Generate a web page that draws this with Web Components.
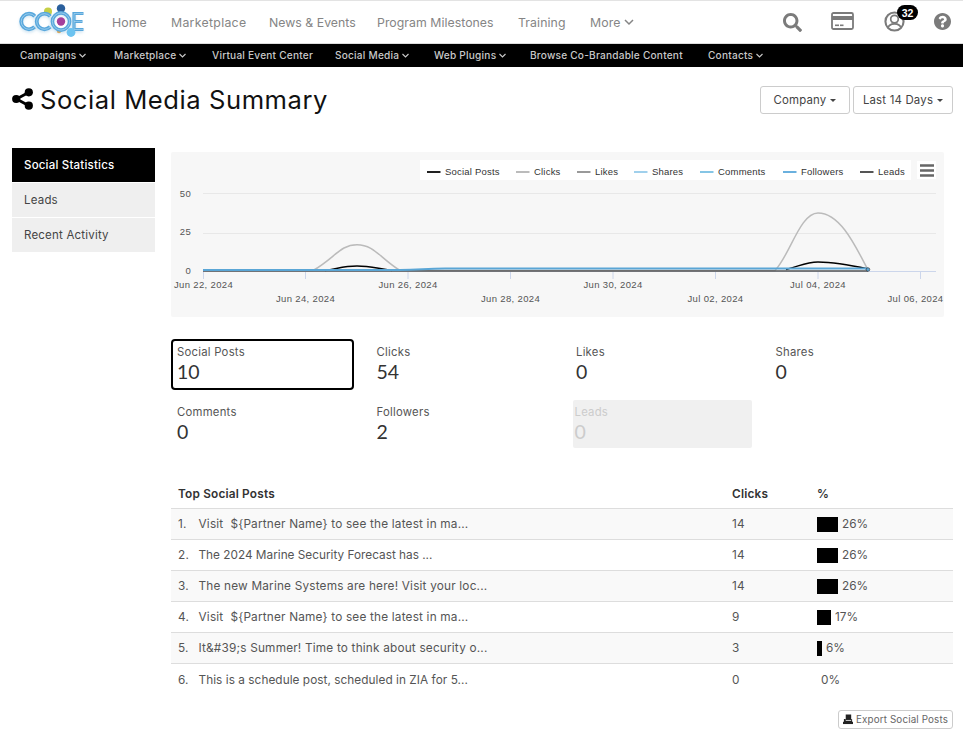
<!DOCTYPE html>
<html lang="en"><head><meta charset="utf-8"><title>Social Media Summary</title>
<style>
html,body{margin:0;padding:0;background:#fff}
body{font-family:Inter,"Open Sans",sans-serif;color:#555;width:963px;height:742px;overflow:hidden}
</style></head><body>
<cc-topnav></cc-topnav>
<cc-subnav></cc-subnav>
<cc-page>
  <cc-title slot="header">Social Media Summary</cc-title>
  <cc-sidenav slot="side"></cc-sidenav>
  <cc-chart></cc-chart>
  <cc-stats>
    <cc-stat label="Social Posts" value="10" selected></cc-stat>
    <cc-stat label="Clicks" value="54"></cc-stat>
    <cc-stat label="Likes" value="0"></cc-stat>
    <cc-stat label="Shares" value="0"></cc-stat>
    <cc-stat label="Comments" value="0"></cc-stat>
    <cc-stat label="Followers" value="2"></cc-stat>
    <cc-stat label="Leads" value="0" disabled></cc-stat>
  </cc-stats>
  <cc-posts></cc-posts>
  <cc-export>Export Social Posts</cc-export>
</cc-page>
<script>
const F='Inter,"Open Sans",sans-serif';
class Base extends HTMLElement{
  connectedCallback(){ if(!this.shadowRoot){ this.attachShadow({mode:'open'}).innerHTML=this.html(); } }
}
const chev=(s,c)=>`<svg width="${s}" height="${s}" viewBox="0 0 12 12" style="flex:none"><path d="M2 4l4 4 4-4" fill="none" stroke="${c}" stroke-width="1.5"/></svg>`;
customElements.define('cc-logo',class extends Base{html(){return `<style>:host{display:block;width:66px;height:26px;flex:none}svg{display:block;overflow:visible}</style>
<svg width="66" height="26" viewBox="20 10 66 26" role="img" aria-label="CCOE logo">
<defs><filter id="b" x="-10%" y="-10%" width="120%" height="130%"><feGaussianBlur stdDeviation="1.4"/></filter></defs>
<g filter="url(#b)" opacity=".4" fill="none" stroke="#7fb8dc" stroke-width="3"><circle cx="29" cy="24" r="8"/><circle cx="44" cy="24" r="8"/><circle cx="61" cy="24" r="9"/><path d="M74 16v16h9"/></g>
<circle cx="48" cy="12.5" r="4" fill="#c6cf45"/>
<circle cx="61" cy="9.5" r="4.2" fill="#2a5f9c"/>
<circle cx="59" cy="32" r="2.2" fill="#d9a860"/>
<g fill="none" stroke-linecap="butt">
<circle cx="29" cy="22.5" r="7.8" stroke="#58a7dc" stroke-width="3.8" stroke-dasharray="37 12" stroke-dashoffset="-6"/>
<circle cx="29" cy="22.5" r="7.8" stroke="#b5dbf2" stroke-width=".7" stroke-dasharray="37 12" stroke-dashoffset="-6"/>
<circle cx="44.5" cy="22.5" r="7.8" stroke="#58a7dc" stroke-width="3.8" stroke-dasharray="37 12" stroke-dashoffset="-6"/>
<circle cx="44.5" cy="22.5" r="7.8" stroke="#b5dbf2" stroke-width=".7" stroke-dasharray="37 12" stroke-dashoffset="-6"/>
<circle cx="61" cy="22.5" r="8.6" stroke="#58a7dc" stroke-width="3.6"/>
<circle cx="61" cy="22.5" r="8.6" stroke="#b5dbf2" stroke-width=".7"/>
<path d="M83.5 14.5H74v16h9.500M74 22.500h8.500" stroke="#58a7dc" stroke-width="3.2"/>
<path d="M83.5 14.5H74v16h9.500M74 22.500h8.500" stroke="#b5dbf2" stroke-width=".6"/>
</g>
<circle cx="61" cy="22.500" r="4.200" fill="#a43f9b"/>
<circle cx="71" cy="33.500" r="4.400" fill="#6cc3f0"/>
</svg>`}});
customElements.define('cc-topnav',class extends Base{html(){
 const items=[['Home',59,.1],['Marketplace',98,.3],['News &amp; Events',108,.02],['Program Milestones',141,.04],['Training',72,.1],['More',50,.1]];
 return `<style>
 :host{display:flex;align-items:center;box-sizing:border-box;height:44px;border-top:1px solid #e3e3e3;border-bottom:1px solid #ddd;padding-left:20px;font:400 12.3px ${F};color:#858585;background:#fff}
 .links{display:flex;margin-left:26px}
 .links span{display:flex;align-items:center;gap:3px;white-space:nowrap}
 .icons{display:flex;align-items:center;margin-left:auto;position:relative;height:42px;width:181px}
 svg{display:block}
 .badge{position:absolute;left:115px;top:4px;background:#000;color:#fff;font:700 10.5px "Liberation Sans",sans-serif;border-radius:10px;width:21px;height:15px;display:flex;align-items:center;justify-content:center}
 </style><cc-logo></cc-logo><div class="links">${items.map(([t,w,l],i)=>`<span style="width:${w}px;letter-spacing:${l}px">${t}${i==5?chev(12,'#858585'):''}</span>`).join('')}</div>
 <div class="icons">
 <svg style="position:absolute;left:1px;top:12px" width="19" height="19" viewBox="0 0 512 512" fill="#7b7b7b"><path d="M505 442.7L405.3 343c-4.5-4.5-10.6-7-17-7H372c27.6-35.3 44-79.7 44-128C416 93.1 322.9 0 208 0S0 93.1 0 208s93.1 208 208 208c48.3 0 92.7-16.4 128-44v16.3c0 6.4 2.5 12.5 7 17l99.7 99.7c9.4 9.4 24.6 9.4 33.9 0l28.3-28.3c9.4-9.4 9.4-24.6.1-34zM208 336c-70.7 0-128-57.2-128-128 0-70.7 57.2-128 128-128 70.7 0 128 57.2 128 128 0 70.7-57.2 128-128 128z"/></svg>
 <svg style="position:absolute;left:49px;top:11px" width="23" height="18" viewBox="0 0 23 18"><rect x="1" y="1" width="21" height="16" rx="1.5" fill="none" stroke="#7b7b7b" stroke-width="1.8"/><rect x="1" y="4" width="21" height="4" fill="#7b7b7b"/><rect x="4" y="12.500" width="4" height="1.600" fill="#7b7b7b"/><rect x="9" y="12.500" width="3.500" height="1.600" fill="#7b7b7b"/></svg>
 <svg style="position:absolute;left:102px;top:10px" width="21" height="21" viewBox="0 0 22 22"><defs><clipPath id="c"><circle cx="11" cy="11" r="9.500"/></clipPath></defs><circle cx="11" cy="11" r="9.500" fill="none" stroke="#7b7b7b" stroke-width="2.200"/><circle cx="11" cy="8.500" r="4" fill="none" stroke="#7b7b7b" stroke-width="1.800"/><path d="M3.500 19c1-4.200 4-5.500 7.500-5.500s6.500 1.300 7.500 5.500" clip-path="url(#c)" fill="none" stroke="#7b7b7b" stroke-width="1.800"/></svg>
 <span class="badge">32</span>
 <svg style="position:absolute;left:152px;top:12px" width="17" height="17" viewBox="8 8 496 496" fill="#7b7b7b"><path d="M504 256c0 136.997-111.043 248-248 248S8 392.997 8 256C8 119.083 119.043 8 256 8s248 111.083 248 248zM262.655 90c-54.497 0-89.255 22.957-116.549 63.758-3.536 5.286-2.353 12.415 2.715 16.258l34.699 26.31c5.205 3.947 12.621 3.008 16.665-2.122 17.864-22.658 30.113-35.797 57.303-35.797 20.429 0 45.698 13.148 45.698 32.958 0 14.976-12.363 22.667-32.534 33.976C247.128 238.528 216 254.941 216 296v4c0 6.627 5.373 12 12 12h56c6.627 0 12-5.373 12-12v-1.333c0-28.462 83.186-29.647 83.186-106.667 0-58.002-60.165-102-116.531-102zM256 338c-25.365 0-46 20.635-46 46 0 25.364 20.635 46 46 46s46-20.636 46-46c0-25.365-20.635-46-46-46z"/></svg>
 </div>`}});
customElements.define('cc-subnav',class extends Base{html(){
 const items=[['Campaigns',94,1],['Marketplace',98,1],['Virtual Event Center',123,0],['Social Media',99,1],['Web Plugins',96,1],['Browse Co-Brandable Content',178,0],['Contacts',80,1]];
 return `<style>:host{display:flex;box-sizing:border-box;height:23px;background:#000;padding:0 0 1px 20px;align-items:center;font:500 10.1px ${F};color:#c9c9c9;letter-spacing:.22px}
 span{display:flex;align-items:center;gap:2px;white-space:nowrap}</style>${items.map(([t,w,c])=>`<span style="width:${w}px">${t}${c?chev(9,'#c9c9c9'):''}</span>`).join('')}`}});
customElements.define('cc-title',class extends Base{html(){return `<style>:host{display:flex;align-items:center;justify-content:space-between;height:66px;box-sizing:border-box}
 .t{display:flex;align-items:center;gap:7px;font:400 25.6px ${F};color:#111;letter-spacing:.55px;white-space:nowrap;margin-top:-2px}
 .b{display:flex;gap:3px}
 svg{display:block}</style>
 <div class="t"><svg width="21" height="22" viewBox="0 0 21 22"><path d="M16.500 4.500L4.500 11l12 6.500" fill="none" stroke="#000" stroke-width="2.800"/><circle cx="16.800" cy="4.300" r="4.100"/><circle cx="4.200" cy="11" r="4.100"/><circle cx="16.800" cy="17.700" r="4.100"/></svg><slot></slot></div>
 <div class="b"><cc-dd style="width:90px">Company</cc-dd><cc-dd style="width:100px">Last 14 Days</cc-dd></div>`}});
customElements.define('cc-dd',class extends Base{html(){return `<style>:host{display:flex;align-items:center;justify-content:center;gap:4px;box-sizing:border-box;height:28px;border:1px solid #ccc;border-radius:3px;font:400 11.4px ${F};color:#444;letter-spacing:.2px;white-space:nowrap}
 i{display:block;border-left:3px solid transparent;border-right:3px solid transparent;border-top:3px solid #444}</style><slot></slot><i></i>`}});
customElements.define('cc-sidenav',class extends Base{html(){return `<style>:host{display:flex;flex-direction:column;gap:1px;font:400 11.5px ${F};color:#444}
 div{height:34px;display:flex;align-items:center;padding-left:12px;background:#efefef;letter-spacing:.2px}
 .a{background:#000;color:#fff;font-weight:500}</style><div class="a">Social Statistics</div><div>Leads</div><div>Recent Activity</div>`}});
customElements.define('cc-page',class extends Base{html(){return `<style>:host{display:block;padding:0 10px 0 12px}
 .g{display:grid;grid-template-columns:143px 782px;column-gap:16px;margin-top:15px}
 .c{padding-top:4px}</style>
 <slot name="header"></slot><div class="g"><div><slot name="side"></slot></div><div class="c"><slot></slot></div></div>`}});
customElements.define('cc-chart',class extends Base{html(){
 const lg=[[427,'#222','Social Posts'],[516,'#bbb','Clicks'],[577,'#999','Likes'],[634,'#a0d0ec','Shares'],[700,'#85c5e5','Comments'],[783,'#6ab0de','Followers'],[860,'#555','Leads']];
 const ticks=[203.5,305.5,408,510.5,613,715.5,818,920.5];
 const labs=[[203.5,287.5,'Jun 22, 2024'],[305.5,302,'Jun 24, 2024'],[408,287.5,'Jun 26, 2024'],[510.5,302,'Jun 28, 2024'],[613,287.5,'Jun 30, 2024'],[715.5,302,'Jul 02, 2024'],[818,287.5,'Jul 04, 2024'],[915.5,302,'Jul 06, 2024']];
 return `<style>:host{display:block;width:773px;height:165px;background:#f7f7f7;border-radius:2px}svg{display:block}text{font-family:"Liberation Sans",Arial,sans-serif}</style>
 <svg width="773" height="165" viewBox="171 152 773 165">
 <rect x="420" y="160" width="491" height="20" fill="#fff"/>
 ${lg.map(([x,c,t])=>`<line x1="${x}" x2="${x+13.5}" y1="172" y2="172" stroke="${c}" stroke-width="2"/><text x="${x+18}" y="175" font-size="9.5" letter-spacing=".2" fill="#333">${t}</text>`).join('')}
 <rect x="917" y="161" width="19" height="18" fill="#fff"/>
 <path d="M920 165.5h14M920 170.5h14M920 175.5h14" stroke="#666" stroke-width="2.4"/>
 <path d="M203 193.5H936M203 233.5H936" stroke="#e8e8e8" stroke-width="1"/>
 <path d="M203 271.5H936" stroke="#ccd6eb" stroke-width="1"/>
 ${ticks.map(x=>`<path d="M${x} 271v8" stroke="#ccd6eb" stroke-width="1"/>`).join('')}
 ${[[50,196.5],[25,235],[0,274]].map(([t,y])=>`<text x="191" y="${y}" text-anchor="end" font-size="9.5" letter-spacing=".3" fill="#555">${t}</text>`).join('')}
 ${labs.map(([x,y,t])=>`<text x="${x}" y="${y}" text-anchor="middle" font-size="9.5" letter-spacing=".35" fill="#555">${t}</text>`).join('')}
 <path d="M203 270.5H313C335 258 340 244.7 357 244.7C374 244.7 380 258 400 270.5H775C790 255 800 213 818 213C840 213 855 245 868 270" fill="none" stroke="#bbb" stroke-width="1.5"/>
 <path d="M325 270.5C340 268 345 266 357 266C369 266 375 268 392 270.5M786 269.5C800 266 806 262 818 262C832 262 850 265 868 269" fill="none" stroke="#000" stroke-width="1.5"/>
 <path d="M203 271H868" stroke="#555" stroke-width="1.5"/>
 <path d="M203 270H400C420 270 425 268.5 445 268.5H868" fill="none" stroke="#5aa6d6" stroke-width="2"/>
 <circle cx="868" cy="269.5" r="1.8" fill="#5aa6d6" stroke="#333" stroke-width=".6"/>
 </svg>`}});
customElements.define('cc-stats',class extends Base{html(){return `<style>:host{display:grid;grid-template-columns:199.5px 199.5px 199.5px 183.5px;row-gap:9px;margin-top:22px;height:118px;align-content:start}</style><slot></slot>`}});
customElements.define('cc-stat',class extends Base{html(){
 const sel=this.hasAttribute('selected'),dis=this.hasAttribute('disabled');
 return `<style>:host{display:block;box-sizing:border-box;height:${dis?'48px':'51px'};width:${dis?'179px':'183px'};border:2px solid ${sel?'#000':'transparent'};border-radius:4px;padding:4px 4px;${dis?'margin:1px 0 0 2.5px;background:#f0f0f0;border:0;border-radius:2px;padding:5px 2px;color:#ccc':'color:#555'}}
 .l{font:400 11.3px/14px ${F};letter-spacing:.25px}.v{font:400 19.5px/24px Lato,sans-serif;color:${dis?'#ccc':'#333'};margin-top:1px}</style>
 <div class="l">${this.getAttribute('label')}</div><div class="v">${this.getAttribute('value')}</div>`}});
customElements.define('cc-posts',class extends Base{html(){
 const rows=[['Visit &nbsp;${Partner Name} to see the latest in ma...',14,26,21,.19],['The 2024 Marine Security Forecast has ...',14,26,21,0],['The new Marine Systems are here! Visit your loc...',14,26,21,.19],['Visit &nbsp;${Partner Name} to see the latest in ma...',9,17,14,.19],['It&amp;#39;s Summer! Time to think about security o...',3,6,5,.19],['This is a schedule post, scheduled in ZIA for 5...',0,0,0,.05]];
 return `<style>:host{display:block;margin-top:23px;font:400 11.8px ${F};letter-spacing:.19px;color:#555}
 .r{display:grid;grid-template-columns:20.5px 533.5px 85px 1fr;height:31px;align-items:center;padding-left:7px;border-bottom:1px solid #ddd;box-sizing:border-box;white-space:nowrap}
 .h{height:29px;font-weight:600;color:#333;grid-template-columns:554px 85px 1fr}
 .r:nth-child(odd){background:#f9f9f9}
 .r:last-child{border-bottom:0}
 .p{display:flex;align-items:center;gap:4px;letter-spacing:0}.p i{display:block;height:15px;background:#000}.z{padding-left:4px}
 </style><div class="r h"><span>Top Social Posts</span><span>Clicks</span><span>%</span></div>
 ${rows.map(([t,c,p,w,l],i)=>`<div class="r"><span>${i+1}.</span><span style="letter-spacing:${l}px">${t}</span><span>${c}</span><span class="p${w?'':' z'}">${w?`<i style="width:${w}px"></i>`:''}${p}%</span></div>`).join('')}`}});
customElements.define('cc-export',class extends Base{html(){return `<style>:host{display:flex;align-items:center;justify-content:center;gap:3px;box-sizing:border-box;width:115px;height:19px;margin:15px 0 0 auto;border:1px solid #ccc;border-radius:3px;font:400 9.8px ${F};color:#666;white-space:nowrap;letter-spacing:.15px}svg{display:block}</style>
 <svg width="10" height="11" viewBox="0 0 11 11"><rect x="3" y="0" width="6" height="6" fill="#222"/><path d="M1 5h2v2h6V5h1v5.500H1z" fill="#222"/><rect x="0" y="8" width="11" height="2.500" fill="#222"/></svg><slot></slot>`}});
</script>
</body></html>
